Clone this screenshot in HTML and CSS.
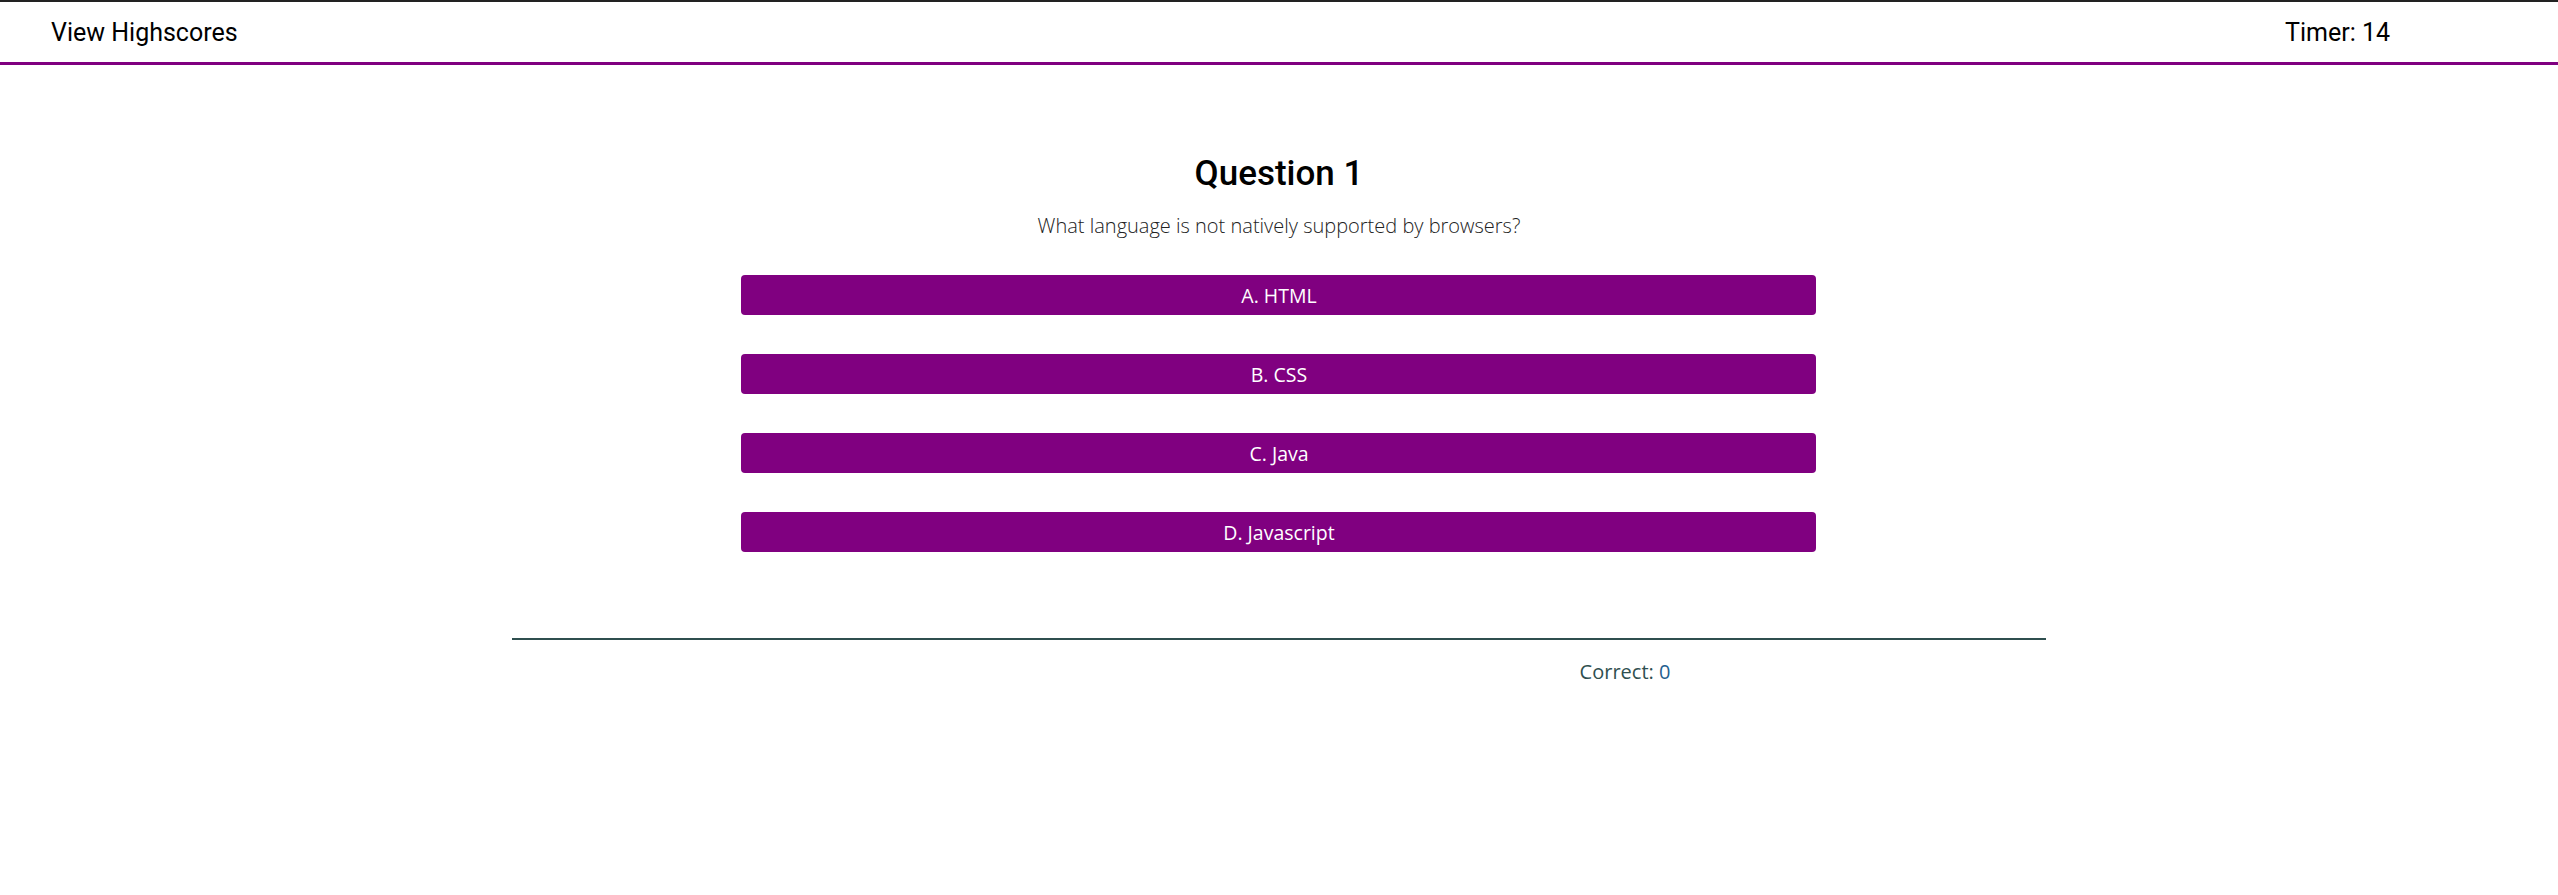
FILE: index.html
```html
<!DOCTYPE html>
<html lang="en">
<head>
<meta charset="utf-8">
<title>Code Quiz</title>
<link rel="stylesheet" href="styles.css">
</head>
<body>
<header class="topbar">
  <a class="highscores" href="#">View Highscores</a>
  <div class="timer">Timer: <span>14</span></div>
</header>
<main class="quiz">
  <section class="question">
    <h2 class="q-title">Question 1</h2>
    <p class="q-text">What language is not natively supported by browsers?</p>
    <div class="choices">
      <button class="choice">A. HTML</button>
      <button class="choice">B. CSS</button>
      <button class="choice">C. Java</button>
      <button class="choice">D. Javascript</button>
    </div>
  </section>
  <hr class="divider">
  <p class="score">Correct: <span class="score-num">0</span></p>
</main>
</body>
</html>
```
FILE: styles.css
```css
html, body {
  margin: 0;
  padding: 0;
  background: #fff;
}
body {
  font-family: "Open Sans", "Liberation Sans", sans-serif;
  color: #000;
}
.topbar {
  display: flex;
  justify-content: space-between;
  align-items: center;
  height: 60px;
  border-top: 2px solid #222;
  border-bottom: 3px solid #800080;
  padding: 0 168px 0 51px;
  font-family: Roboto, "Liberation Sans", sans-serif;
  font-size: 25px;
}
.highscores {
  color: #000;
  text-decoration: none;
}
.quiz {
  width: 60%;
  margin: 0 auto;
}
.question {
  text-align: center;
  padding-top: 1px;
}
.q-title {
  font-family: Roboto, "Liberation Sans", sans-serif;
  font-weight: 500;
  font-size: 35px;
  margin: 87px 0 0;
  line-height: 1.2;
}
.q-text {
  font-weight: 300;
  font-size: 20px;
  color: #222;
  margin: 17px 0 0;
}
.choices {
  display: flex;
  flex-direction: column;
  gap: 39px;
  width: 1075px;
  margin: 36px auto 0;
}
.choice {
  display: block;
  height: 40px;
  border: none;
  border-radius: 4px;
  background: #800080;
  color: #fff;
  font-family: "Open Sans", "Liberation Sans", sans-serif;
  font-size: 19.5px;
  padding: 0;
}
.divider {
  margin: 86px 0 0;
  border: none;
  height: 2px;
  background: #2f4f4f;
}
.score {
  margin: 18px 0 0;
  padding-left: 1068px;
  font-size: 20px;
  font-weight: 400;
  color: #2f4f4f;
}
.score-num {
  color: #1f5f8f;
}
```
